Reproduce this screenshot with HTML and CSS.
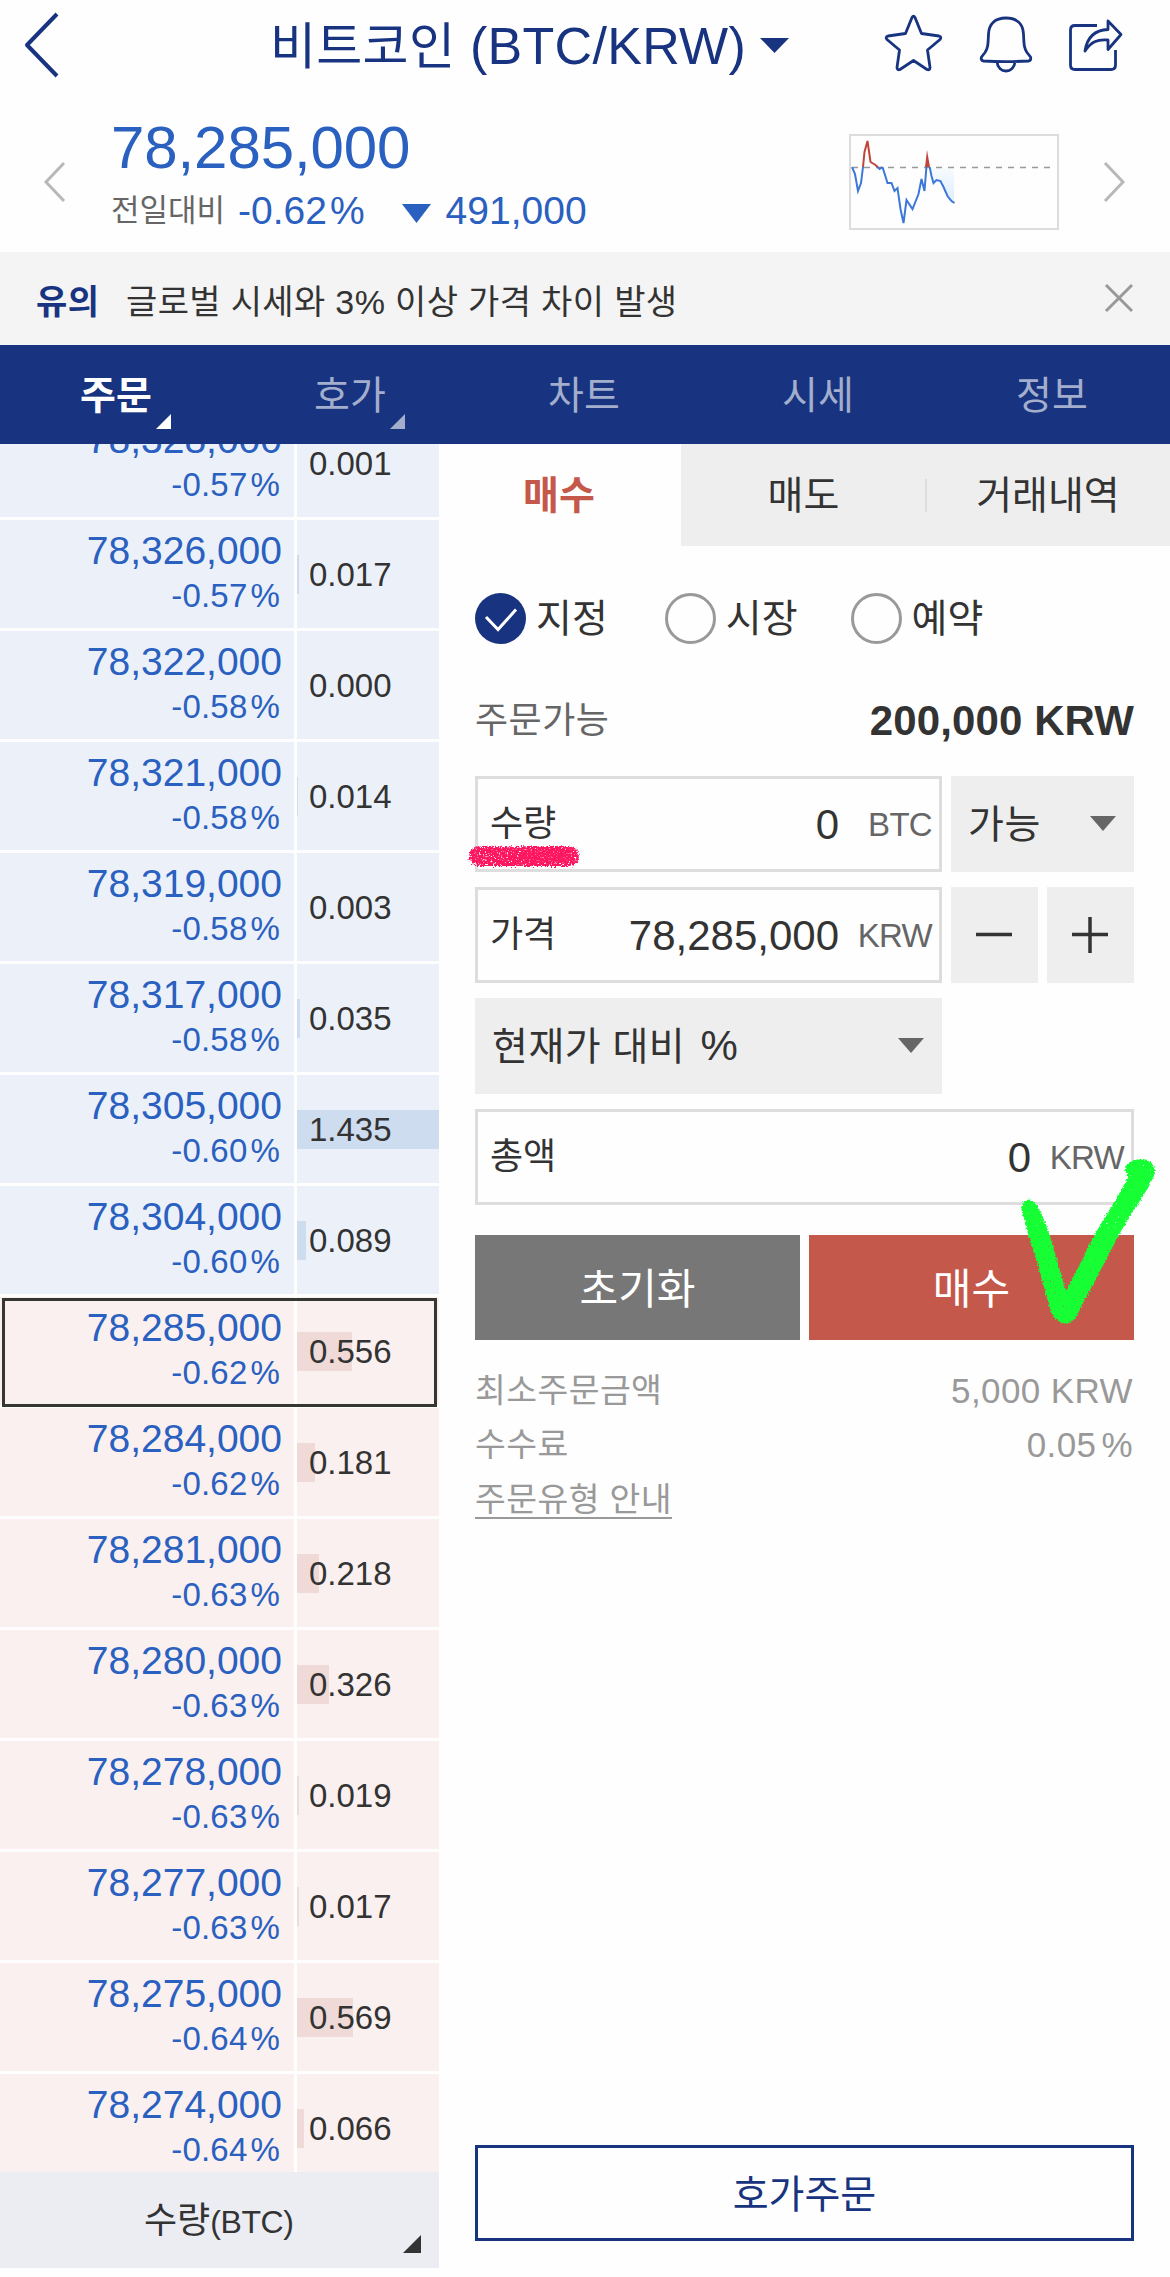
FILE: index.html
```html
<!DOCTYPE html>
<html lang="ko">
<head>
    <meta charset="UTF-8">
    <meta name="viewport" content="width=device-width, initial-scale=1.0">
    <title>비트코인 (BTC/KRW)</title>
    <link rel="stylesheet" href="styles.css">
</head>
<body>
    <header class="topbar">
        <svg class="back" width="40" height="70" viewBox="0 0 40 70"><path d="M37 4L7 35l30 31" /></svg>
        <h1 class="title"><span class="ko">비트코인</span> (BTC/KRW)</h1>
        <svg class="caret-title" width="29" height="15" viewBox="0 0 29 15"><path d="M0 0h29L14.500 15z" /></svg>
        <div class="icons">
            <svg width="60" height="60" viewBox="0 0 60 60"><path d="M31 3.500q-1.500-2.500-3 0L21.500 19.500 4 22q-3 .8-1 3.500L15.500 36l-2.500 17.500q.3 3 3 2L29.500 46.500l13.500 9q3 1 3-2L43.500 36l12.500-10.500q2-2.700-1-3.500L37.500 19.500z" /></svg>
            <svg class="bell" width="60" height="60" viewBox="0 0 60 60"><path d="M30 4C19 4 13 10 12.500 20c-.5 11-.5 14-3.500 18.500L5.500 43q-1 3.500 2 4 22.500 1.200 45 0 3-.5 2-4L51 38.500c-3-4.500-3-7.500-3.500-18.500C47 10 41 4 30 4zM21 48c1 12 17 12 18 0" /></svg>
            <svg class="share" width="60" height="60" viewBox="0 0 60 60"><path d="M33 11.500H11q-4.500 0-4.500 4.500v35q0 4.500 4.500 4.500h36q4.500 0 4.500-4.500V36M44 7l13 13.500-13 15V26c-11-1-17 2-23 11 2-13 9-21 23-21.500z" /></svg>
        </div>
    </header>

    <section class="price">
        <svg class="arrow-prev" width="24" height="44" viewBox="0 0 24 44"><path d="M21 3L3 22l18 19" /></svg>
        <div class="price-info">
            <div class="price-now">78,285,000</div>
            <div class="price-diff">
                <span class="diff-label">전일대비</span>
                <span class="diff-rate">-0.62<i>%</i></span>
                <svg width="29" height="19" viewBox="0 0 29 19"><path d="M0 0h29L14.500 19z" /></svg>
                <span>491,000</span>
            </div>
        </div>
        <svg class="chart" width="210" height="96" viewBox="0 0 210 96">
            <defs>
                <linearGradient id="fade" x1="0" y1="0" x2="0" y2="1">
                    <stop offset="0" stop-color="#f7fbff" />
                    <stop offset="1" stop-color="#dcedfb" />
                </linearGradient>
                <clipPath id="above"><rect width="211" height="33" /></clipPath>
                <clipPath id="below"><rect y="33" width="211" height="64" /></clipPath>
            </defs>
            <rect x="1" y="1" width="208" height="94" fill="#fefefe" stroke="#dcdcdc" stroke-width="2" />
            <path d="M80 34l2 9 2 7 3-3 4 1 3 6 4 9 4 5 3 2V35z" fill="url(#fade)" />
            <path d="M3 33.500h199" stroke="#999" stroke-width="1.500" stroke-dasharray="6 6" />
            <g fill="none" stroke-width="2" stroke-linejoin="miter">
                <path clip-path="url(#below)" stroke="#3b78d8" d="M3 33l3 7 3 17 3-8 2-16 1.500-15 3-12 3 22 5 3 4 4 3-2 5 16h4l3 8 3-3 3 21 3 14 3-23 6 9 6-15 3-15 3 12 2-25 1-16 2 16 2 10 2 7 3-3 4 1 3 6 4 9 4 5 3 2" />
                <path clip-path="url(#above)" stroke="#c0443a" d="M14 33l1.500-15 3-11 3 21 5 3 4 4 3-2" />
                <path fill="#c0443a" d="M76 33l2-17 3 17z" />
            </g>
        </svg>
        <svg class="arrow-next" width="24" height="44" viewBox="0 0 24 44"><path d="M3 3l18 19L3 41" /></svg>
    </section>

    <div class="notice">
        <b>유의</b>
        <span>글로벌 시세와 3% 이상 가격 차이 발생</span>
        <svg width="30" height="30" viewBox="0 0 30 30"><path d="M2 2l26 26M28 2L2 28" /></svg>
    </div>

    <nav class="menu">
        <a class="on more">주문</a>
        <a class="more">호가</a>
        <a>차트</a>
        <a>시세</a>
        <a>정보</a>
    </nav>

    <main class="trade">
        <div class="book">
            <div class="rows">
                <div class="row up"><div class="cell"><p>78,328,000</p><small>-0.57<i>%</i></small></div><div class="qty"><span>0.001</span></div></div>
                <div class="row up"><div class="cell"><p>78,326,000</p><small>-0.57<i>%</i></small></div><div class="qty"><b style="width:2px"></b><span>0.017</span></div></div>
                <div class="row up"><div class="cell"><p>78,322,000</p><small>-0.58<i>%</i></small></div><div class="qty"><span>0.000</span></div></div>
                <div class="row up"><div class="cell"><p>78,321,000</p><small>-0.58<i>%</i></small></div><div class="qty"><b style="width:1px"></b><span>0.014</span></div></div>
                <div class="row up"><div class="cell"><p>78,319,000</p><small>-0.58<i>%</i></small></div><div class="qty"><span>0.003</span></div></div>
                <div class="row up"><div class="cell"><p>78,317,000</p><small>-0.58<i>%</i></small></div><div class="qty"><b style="width:3px"></b><span>0.035</span></div></div>
                <div class="row up"><div class="cell"><p>78,305,000</p><small>-0.60<i>%</i></small></div><div class="qty"><b style="width:142px"></b><span>1.435</span></div></div>
                <div class="row up"><div class="cell"><p>78,304,000</p><small>-0.60<i>%</i></small></div><div class="qty"><b style="width:9px"></b><span>0.089</span></div></div>
                <div class="row down now"><div class="cell"><p>78,285,000</p><small>-0.62<i>%</i></small></div><div class="qty"><b style="width:55px"></b><span>0.556</span></div></div>
                <div class="row down"><div class="cell"><p>78,284,000</p><small>-0.62<i>%</i></small></div><div class="qty"><b style="width:18px"></b><span>0.181</span></div></div>
                <div class="row down"><div class="cell"><p>78,281,000</p><small>-0.63<i>%</i></small></div><div class="qty"><b style="width:22px"></b><span>0.218</span></div></div>
                <div class="row down"><div class="cell"><p>78,280,000</p><small>-0.63<i>%</i></small></div><div class="qty"><b style="width:32px"></b><span>0.326</span></div></div>
                <div class="row down"><div class="cell"><p>78,278,000</p><small>-0.63<i>%</i></small></div><div class="qty"><b style="width:2px"></b><span>0.019</span></div></div>
                <div class="row down"><div class="cell"><p>78,277,000</p><small>-0.63<i>%</i></small></div><div class="qty"><b style="width:2px"></b><span>0.017</span></div></div>
                <div class="row down"><div class="cell"><p>78,275,000</p><small>-0.64<i>%</i></small></div><div class="qty"><b style="width:56px"></b><span>0.569</span></div></div>
                <div class="row down"><div class="cell"><p>78,274,000</p><small>-0.64<i>%</i></small></div><div class="qty"><b style="width:7px"></b><span>0.066</span></div></div>
            </div>
            <div class="book-foot">수량<small>(BTC)</small></div>
        </div>

        <div class="order">
            <div class="tabs">
                <a class="on">매수</a>
                <a>매도</a>
                <a>거래내역</a>
            </div>
            <div class="form">
                <div class="types">
                    <label><svg width="51" height="51" viewBox="0 0 51 51"><circle cx="25.500" cy="25.500" r="25.500" fill="#183480" /><path d="M11 24l12 12.500L41 16.500" fill="none" stroke="#fff" stroke-width="3" /></svg>지정</label>
                    <label><span class="radio"></span>시장</label>
                    <label><span class="radio"></span>예약</label>
                </div>
                <div class="avail"><span>주문가능</span><b>200,000 KRW</b></div>

                <div class="line">
                    <div class="field">
                        <span>수량</span><strong>0</strong><em>BTC</em>
                        <svg class="mark-pink" width="130" height="40" viewBox="0 0 130 40">
                            <defs>
                                <filter id="crayon" filterUnits="userSpaceOnUse" x="0" y="0" width="130" height="40">
                                    <feTurbulence type="fractalNoise" baseFrequency="0.5 0.7" numOctaves="3" seed="4" result="n" />
                                    <feDisplacementMap in="SourceGraphic" in2="n" scale="7" xChannelSelector="R" yChannelSelector="G" result="d" />
                                    <feColorMatrix in="n" type="matrix" values="0 0 0 0 0  0 0 0 0 0  0 0 0 0 0  0 -6 0 0 4.500" result="g" />
                                    <feComposite in="d" in2="g" operator="in" />
                                </filter>
                            </defs>
                            <path d="M20 20h90" stroke="#ff1760" stroke-width="20" stroke-linecap="round" filter="url(#crayon)" />
                            <path d="M68 20h38" stroke="#ff1760" stroke-opacity=".6" stroke-width="13" stroke-linecap="round" />
                        </svg>
                    </div>
                    <div class="pick short">가능<i class="caret"></i></div>
                </div>
                <div class="line">
                    <div class="field"><span>가격</span><strong>78,285,000</strong><em>KRW</em></div>
                    <div class="step"><svg width="36" height="36" viewBox="0 0 36 36"><path d="M0 17.500h36" /></svg></div>
                    <div class="step"><svg width="36" height="36" viewBox="0 0 36 36"><path d="M0 17.500h36M18 0v36" /></svg></div>
                </div>
                <div class="line">
                    <div class="pick"><span>현재가 대비 <i class="pct">%</i></span><i class="caret"></i></div>
                </div>
                <div class="line">
                    <div class="field wide"><span>총액</span><strong>0</strong><em>KRW</em></div>
                </div>

                <div class="buttons">
                    <div class="btn">초기화</div>
                    <div class="btn btn-buy">매수
                        <svg class="mark-green" width="170" height="200" viewBox="0 0 170 200">
                            <defs>
                                <filter id="rough" filterUnits="userSpaceOnUse" x="0" y="0" width="170" height="200">
                                    <feTurbulence type="fractalNoise" baseFrequency="0.6" numOctaves="2" seed="8" result="n" />
                                    <feDisplacementMap in="SourceGraphic" in2="n" scale="4" xChannelSelector="R" yChannelSelector="G" result="d" />
                                    <feColorMatrix in="n" type="matrix" values="0 0 0 0 0  0 0 0 0 0  0 0 0 0 0  0 -7 0 0 6.100" result="g" />
                                    <feComposite in="d" in2="g" operator="in" />
                                </filter>
                            </defs>
                            <path filter="url(#rough)" fill="#16ff36" stroke="#16ff36" stroke-width="1" d="M22 70Q21 60 30 60Q37 63 42 76Q47 88 50 98L66 153Q72 139 80 125Q87 110 95 95Q105 77 115 62L129 37Q122 29 129 23Q135 19 146 20Q158 26 153 37Q148 48 140 60Q129 76 120 92L100 130L80 168Q75 183 65 183Q55 182 51 170L44 145L37 120L29 95Z" />
                        </svg>
                    </div>
                </div>

                <dl class="info">
                    <div><dt>최소주문금액</dt><dd>5,000 KRW</dd></div>
                    <div><dt>수수료</dt><dd>0.05<i>%</i></dd></div>
                    <div><dt><a class="guide">주문유형 안내</a></dt></div>
                </dl>

                <div class="btn-book">호가주문</div>
            </div>
        </div>
    </main>
</body>
</html>
```
FILE: styles.css
```css
* {
    box-sizing: border-box;
}
body {
    margin: 0;
    width: 1170px;
    height: 2277px;
    overflow: hidden;
    background: #fefefe;
    color: #333;
    font-family: "Liberation Sans", "Noto Sans CJK KR", sans-serif;
}
p, h1, dl, dd {
    margin: 0;
}
i, em {
    font-style: normal;
}
svg {
    display: block;
    flex: none;
}

/* header */
.topbar {
    display: flex;
    align-items: center;
    height: 90px;
    padding-left: 20px;
    color: #183480;
}
.topbar svg {
    fill: none;
    stroke: #183480;
    stroke-width: 2.800;
    stroke-linejoin: round;
}
.topbar .back {
    stroke-width: 4;
}
.topbar .caret-title {
    fill: #183480;
    stroke: none;
    margin: 1px 0 0 15px;
}
.title {
    width: 475px;
    margin-left: 210px;
    font-size: 52px;
    font-weight: normal;
    line-height: 90px;
    letter-spacing: 0.3px;
    white-space: nowrap;
    padding-top: 3px;
}
.title .ko {
    font-size: 50px;
}
.icons {
    display: flex;
    margin: 0 0 2px 95px;
}
.bell {
    margin-left: 32px;
}
.share {
    margin-left: 28px;
}

/* current price */
.price {
    display: flex;
    height: 162px;
    padding-left: 43px;
    color: #2a60bf;
}
.arrow-prev, .arrow-next {
    fill: none;
    stroke: #b8b8b8;
    stroke-width: 3;
    margin-top: 70px;
}
.price-info {
    width: 738px;
    margin: 23px 0 0 44px;
}
.price-now {
    font-size: 60px;
    line-height: 70px;
    letter-spacing: -0.1px;
}
.price-diff {
    display: flex;
    align-items: center;
    font-size: 39px;
    line-height: 50px;
    margin-top: 3px;
}
.price-diff svg {
    fill: #2a60bf;
    margin: 5px 15px 0 37px;
}
.diff-label {
    color: #666;
    font-size: 31px;
    width: 127px;
}
.diff-rate i {
    margin-left: 3px;
}
.chart {
    margin-top: 44px;
}
.arrow-next {
    margin-left: 43px;
}
.notice {
    display: flex;
    align-items: center;
    height: 93px;
    padding: 6px 36px 0;
    background: #f4f4f4;
    font-size: 34px;
    line-height: 50px;
    letter-spacing: 0.35px;
}
.notice b {
    width: 90px;
    color: #183480;
}
.notice svg {
    margin: -8px 0 0 auto;
    stroke: #999;
    stroke-width: 3;
}

/* menu */
.menu {
    display: grid;
    grid-template-columns: repeat(5, 1fr);
    height: 99px;
    background: #183480;
    color: #a3aecd;
    font-size: 39px;
    line-height: 101px;
    text-align: center;
}
.menu a {
    position: relative;
    padding-right: 2px;
}
.menu .on {
    color: #fff;
    font-weight: bold;
}
.menu .more::after {
    content: "";
    position: absolute;
    left: 156px;
    top: 69px;
    border-left: 15px solid transparent;
    border-bottom: 15px solid;
}

/* order book */
.trade {
    display: flex;
    height: 1833px;
}
.book {
    width: 439px;
}
.rows {
    display: flex;
    flex-direction: column;
    justify-content: flex-end;
    height: 1728px;
    overflow: hidden;
}
.row {
    display: grid;
    grid-template-columns: 294px 142px;
    gap: 3px;
    flex: none;
    height: 108px;
    margin-bottom: 3px;
    position: relative;
}
.row:last-child {
    height: 98px;
    margin-bottom: 0;
}
.cell {
    padding: 9px 12px 0 0;
    text-align: right;
    color: #2a60bf;
}
.cell p {
    font-size: 39px;
    line-height: 44px;
}
.cell small {
    display: block;
    font-size: 33px;
    line-height: 44px;
    letter-spacing: 0.2px;
    padding: 1px 2px 0 0;
}
.cell small i {
    margin-left: 3px;
}
.up > div {
    background: #ecf1f9;
}
.down > div {
    background: #f9f0ef;
}
.qty {
    position: relative;
    padding: 33px 0 0 12px;
    font-size: 33px;
    line-height: 43px;
}
.qty b {
    position: absolute;
    left: 0;
    top: 35px;
    height: 39px;
    background: #cddcee;
}
.down .qty b {
    background: #efdad8;
}
.qty span {
    position: relative;
}
.now::after {
    content: "";
    position: absolute;
    inset: 1px 2px -2px 2px;
    border: 3px solid #363732;
}
.book-foot {
    position: relative;
    height: 96px;
    background: #ecedf3;
    font-size: 36px;
    line-height: 97px;
    padding-left: 144px;
}
.book-foot small {
    font-size: 32px;
    letter-spacing: -0.4px;
}
.book-foot::after {
    content: "";
    position: absolute;
    left: 403px;
    top: 63px;
    border-left: 18px solid transparent;
    border-bottom: 18px solid;
}

/* order form */
.order {
    flex: 1;
}
.tabs {
    display: grid;
    grid-template-columns: 242px 245px 244px;
    height: 102px;
    font-size: 39px;
    line-height: 100px;
    text-align: center;
}
.tabs a {
    background: #eee;
    position: relative;
    padding-top: 2px;
}
.tabs .on {
    background: none;
    color: #c4584b;
    font-weight: bold;
    padding-right: 2px;
}
.tabs a:last-child::before {
    content: "";
    position: absolute;
    left: -1px;
    top: 35px;
    width: 2px;
    height: 33px;
    background: #ddd;
}
.form {
    display: flex;
    flex-direction: column;
    padding: 47px 36px 0;
    height: 1695px;
}
.types {
    display: flex;
    gap: 57px;
    height: 51px;
}
.types label {
    display: flex;
    align-items: center;
    gap: 10px;
    font-size: 39px;
    line-height: 51px;
}
.types label:nth-child(2) {
    margin-right: -4px;
}
.radio {
    width: 51px;
    height: 51px;
    border: 3px solid #999;
    border-radius: 50%;
}
.avail {
    display: flex;
    justify-content: space-between;
    margin: 51px 0 30px;
    line-height: 51px;
    font-size: 36px;
    letter-spacing: 0.5px;
    color: #666;
}
.avail b {
    font-size: 42px;
    letter-spacing: 0.1px;
    color: #333;
}
.line {
    display: flex;
    gap: 9px;
    height: 96px;
    margin-bottom: 15px;
}
.field {
    position: relative;
    display: flex;
    align-items: center;
    width: 467px;
    border: 3px solid #ddd;
    padding: 2px 7px 0 12px;
    font-size: 36px;
}
.field span {
    line-height: 50px;
    margin-top: -2px;
}
.field.wide {
    width: 659px;
}
.field strong {
    margin-left: auto;
    font-size: 42px;
    font-weight: normal;
}
.field em {
    width: 93px;
    text-align: right;
    font-size: 33px;
    letter-spacing: -0.7px;
    color: #666;
}
.field em, .field strong {
    line-height: 50px;
}
.pick {
    display: flex;
    align-items: center;
    justify-content: space-between;
    width: 467px;
    padding: 2px 18px 0 17px;
    background: #eee;
    font-size: 39px;
    line-height: 94px;
    letter-spacing: 0.5px;
}
.pick.short {
    width: 183px;
}
.pct {
    margin-left: 4px;
    font-size: 42px;
    line-height: 50px;
}
.caret {
    border: 13.500px solid transparent;
    border-top: 15px solid #666;
    border-bottom: 0;
    margin-top: -3px;
}
.step {
    width: 87px;
    background: #eee;
    padding: 30px 25px;
}
.step svg {
    stroke: #333;
    stroke-width: 3.500;
}
.buttons {
    display: flex;
    gap: 9px;
    margin-top: 15px;
}
.btn {
    flex: 1;
    position: relative;
    height: 105px;
    background: #777;
    color: #fff;
    font-size: 42px;
    line-height: 109px;
    text-align: center;
}
.btn-buy {
    background: #c4584b;
}
.mark-pink {
    position: absolute;
    left: -19px;
    top: 57px;
}
.mark-green {
    position: absolute;
    left: 191px;
    top: -95px;
}
.info {
    margin-top: 24px;
    color: #999;
    font-size: 33.500px;
    line-height: 54px;
    letter-spacing: 0.4px;
}
.info > div {
    display: flex;
    justify-content: space-between;
}
.info dd {
    font-size: 35px;
    padding-right: 1px;
}
.info dd i {
    margin-left: 5px;
}
.guide {
    display: block;
    height: 47px;
    line-height: 56px;
    border-bottom: 2px solid #999;
}
.btn-book {
    margin-top: auto;
    height: 96px;
    border: 3px solid #183480;
    color: #183480;
    font-size: 39px;
    line-height: 93px;
    text-align: center;
}
```
